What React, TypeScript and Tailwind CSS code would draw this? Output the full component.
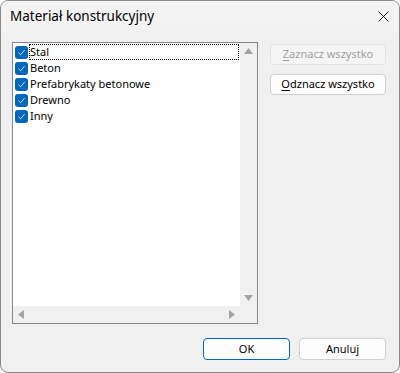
import { useState } from "react";

const items = ["Stal", "Beton", "Prefabrykaty betonowe", "Drewno", "Inny"];

function Check() {
  return (
    <span className="w-[13px] h-[13px] rounded-[3px] bg-[#0067c0] flex items-center justify-center shrink-0">
      <svg width="9" height="9" viewBox="0 0 9 9">
        <path d="M1.5 4.8 L3.6 6.8 L7.6 2.2" fill="none" stroke="#cfe3f6" strokeWidth="1" />
      </svg>
    </span>
  );
}

export default function App() {
  const [checked] = useState(items.map(() => true));

  return (
    <div className="w-[400px] h-[373px] bg-white" style={{ fontFamily: '"Segoe UI", "Noto Sans", sans-serif' }}>
      <div className="w-full h-full border border-[#8a8a8a] rounded-[8px] overflow-hidden flex flex-col bg-[#f0f0f0] text-[11px] text-black">
        {/* Title bar */}
        <div className="h-[30px] bg-[#f3f3f3] flex items-center justify-between pl-[9px] pr-[9px] shrink-0">
          <span className="text-[13.5px]">Materiał konstrukcyjny</span>
          <svg width="11" height="11" viewBox="0 0 11 11" className="mr-[1px]">
            <path d="M0.5 0.5 L10.5 10.5 M10.5 0.5 L0.5 10.5" stroke="#1a1a1a" strokeWidth="1" />
          </svg>
        </div>

        {/* Body */}
        <div className="flex-1 flex flex-col px-[11px] pt-[11px] pb-[12px]">
          <div className="flex gap-[12px]">
            {/* List */}
            <div className="w-[246px] h-[282px] border border-[#828790] bg-[#f0f0f0] grid grid-cols-[1fr_17px] grid-rows-[1fr_17px]">
              <div className="bg-white pt-[1px] pl-[2px] pr-[1px]">
                {items.map((it, i) => (
                  <div key={it} className="h-[16px] flex items-center">
                    {checked[i] && <Check />}
                    <span
                      className={`ml-[1px] h-[16px] leading-[16px] pl-[1px] ${
                        i === 0 ? "flex-1 outline outline-1 outline-dotted outline-black -outline-offset-1" : ""
                      }`}
                    >
                      {it}
                    </span>
                  </div>
                ))}
              </div>
              <div className="flex flex-col items-center justify-between py-[5px]">
                <svg width="9" height="6" viewBox="0 0 9 6"><path d="M4.5 0 L9 6 L0 6 Z" fill="#a3a3a3" /></svg>
                <svg width="9" height="6" viewBox="0 0 9 6"><path d="M0 0 L9 0 L4.5 6 Z" fill="#a3a3a3" /></svg>
              </div>
              <div className="flex items-center justify-between px-[5px]">
                <svg width="6" height="9" viewBox="0 0 6 9"><path d="M0 4.5 L6 0 L6 9 Z" fill="#a3a3a3" /></svg>
                <svg width="6" height="9" viewBox="0 0 6 9"><path d="M6 4.5 L0 0 L0 9 Z" fill="#a3a3a3" /></svg>
              </div>
              <div />
            </div>

            {/* Side buttons */}
            <div className="flex flex-col gap-[9px] pt-[2px]">
              <button className="w-[116px] h-[21px] rounded-[4px] border border-[#e3e3e3] bg-[#f5f5f5] text-[#a0a0a0] text-[11px]">
                <span className="underline underline-offset-2">Z</span>aznacz wszystko
              </button>
              <button className="w-[116px] h-[21px] rounded-[4px] border border-[#d0d0d0] bg-[#fdfdfd] text-[11px]">
                <span className="underline underline-offset-2">O</span>dznacz wszystko
              </button>
            </div>
          </div>

          {/* Footer buttons */}
          <div className="flex justify-end gap-[9px] mt-auto mr-[2px]">
            <button className="w-[87px] h-[22px] rounded-[4px] border border-[#0067c0] bg-[#fdfdfd] text-[11px]">OK</button>
            <button className="w-[87px] h-[22px] rounded-[4px] border border-[#d0d0d0] bg-[#fdfdfd] text-[11px]">Anuluj</button>
          </div>
        </div>
      </div>
    </div>
  );
}
